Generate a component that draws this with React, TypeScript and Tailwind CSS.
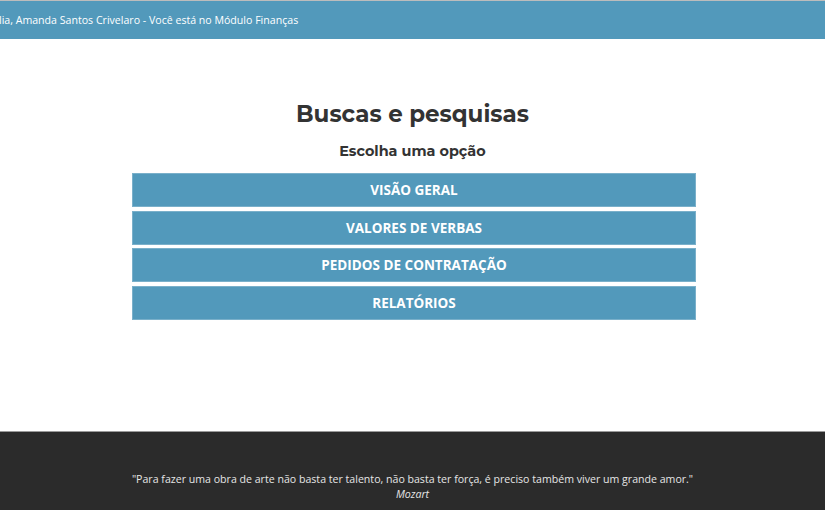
const options = ['Visão geral', 'Valores de verbas', 'Pedidos de contratação', 'Relatórios'];

export default function App() {
  return (
    <div className="flex h-[510px] flex-col bg-white font-['Open_Sans',sans-serif]">
      <header className="h-[39px] border-t border-[#bcbcbc] bg-[#5299bb]">
        <p className="ml-[-1px] pt-[11px] text-[10.6px] leading-[16px] text-white">
          lia, Amanda Santos Crivelaro - Você está no Módulo Finanças
        </p>
      </header>

      <main className="flex-1 pt-[60px]">
        <h1 className="text-center font-['Montserrat','Noto_Sans',sans-serif] text-[23px] font-bold leading-[30px] text-[#333]">
          Buscas e pesquisas
        </h1>
        <h2 className="mt-[12px] text-center font-['Montserrat','Noto_Sans',sans-serif] text-[14.4px] font-bold leading-[20px] text-[#333]">
          Escolha uma opção
        </h2>
        <div className="pl-[3px]">
          <div className="mx-auto mt-[12px] flex w-[564px] flex-col gap-[3.7px]">
            {options.map((o) => (
              <button
                key={o}
                className="h-[34px] border border-[#7ab0ca] bg-[#5299bb] text-[13.5px] font-bold uppercase text-white"
              >
                {o}
              </button>
            ))}
          </div>
        </div>
      </main>

      <footer className="h-[79px] border-t border-[#9a9a9a] bg-[#2b2b2b] pt-[40px] text-center text-[10.6px] leading-[15px] text-[#e6e6e6]">
        <p>"Para fazer uma obra de arte não basta ter talento, não basta ter força, é preciso também viver um grande amor."</p>
        <p className="italic">Mozart</p>
      </footer>
    </div>
  );
}
